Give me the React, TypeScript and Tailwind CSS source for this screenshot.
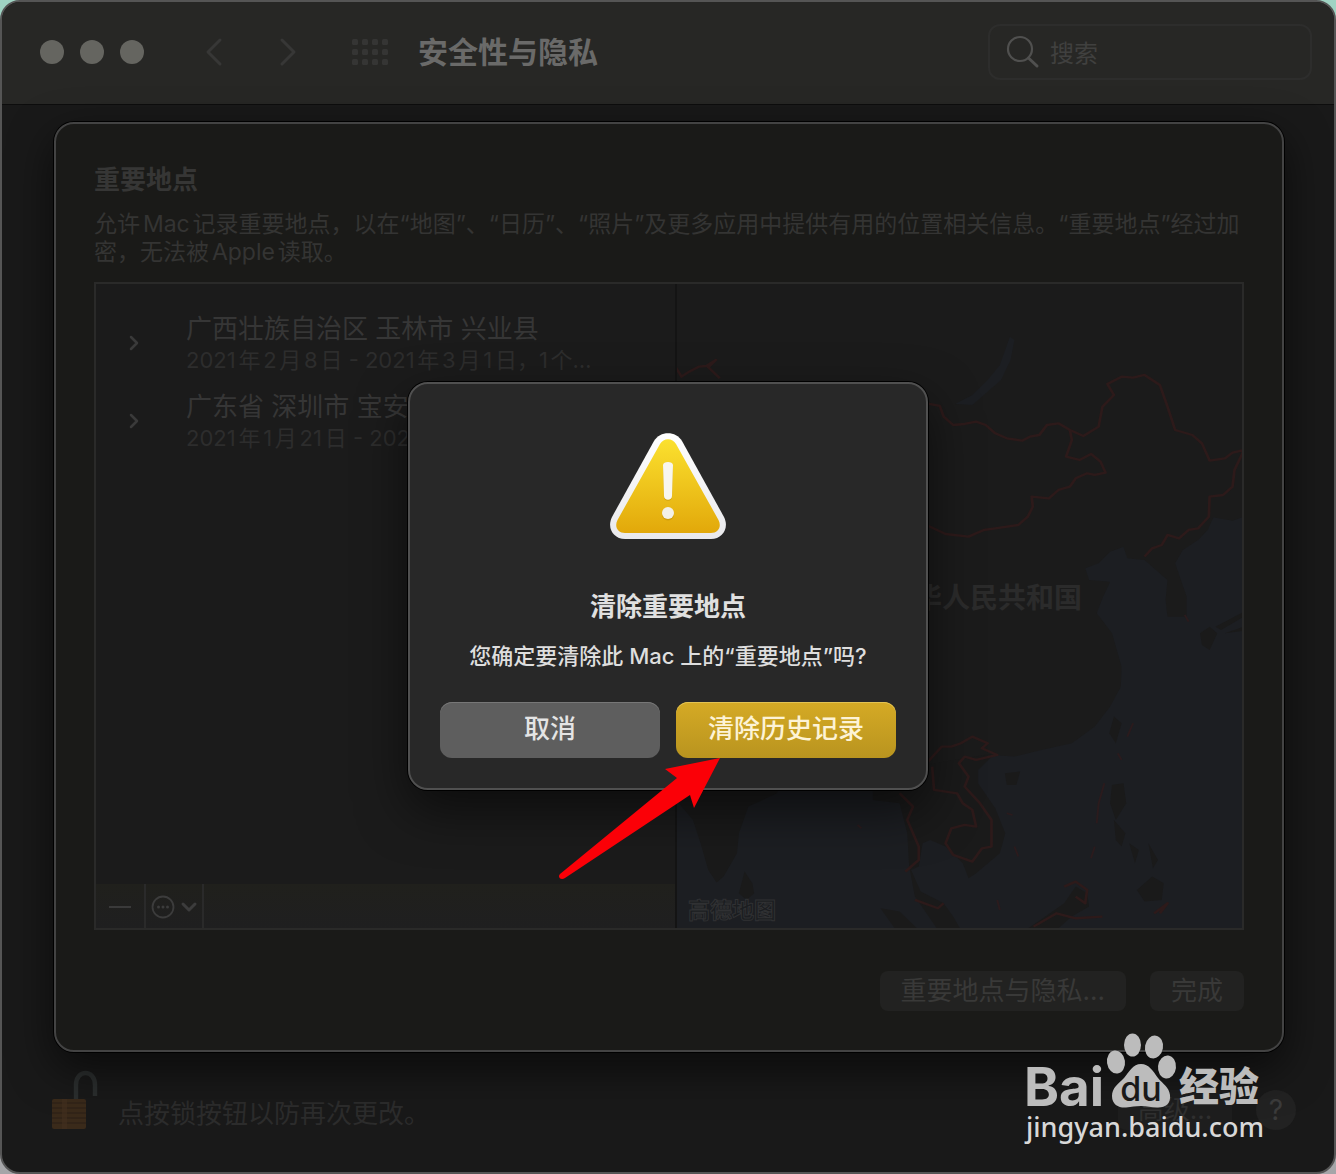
import { ReactNode } from "react";
import { ChevronDown, ChevronLeft, ChevronRight } from "lucide-react";

interface Place {
  id: number;
  name: string;
  period: string;
}

const places: Place[] = [
  {
    id: 1,
    name: "广西壮族自治区 玉林市 兴业县",
    period: "2021年2月8日 - 2021年3月1日，1个…",
  },
  {
    id: 2,
    name: "广东省 深圳市 宝安区",
    period: "2021年1月21日 - 2021年2月7日",
  },
];

const SheetButton = ({ children }: { children: ReactNode }) => {
  return (
    <button className="h-10 rounded-lg bg-[#222221] px-[21px] text-[26px] leading-10 text-[#393938]">
      {children}
    </button>
  );
};

const SearchIcon = () => (
  <svg viewBox="0 0 34 34" className="size-[34px]" fill="none" stroke="#50504f">
    <circle cx="14" cy="14" r="12" strokeWidth="2.2" />
    <path d="M22.5 23 L31 31" strokeWidth="3" strokeLinecap="round" />
  </svg>
);

const GridIcon = () => (
  <svg viewBox="0 0 36 28" className="h-7 w-9" fill="#353534">
    {[0, 10, 20, 30].map((x) =>
      [1, 11, 21].map((y) => (
        <rect key={`${x}-${y}`} x={x} y={y} width="6" height="6" rx="1.5" />
      ))
    )}
  </svg>
);

const Toolbar = () => {
  return (
    <header className="flex h-[103px] items-center border-b border-[#0d0d0d] bg-[#272725] pr-[22px] pb-0.5 pl-[38px]">
      <div className="flex gap-4">
        <button aria-label="关闭" className="size-6 rounded-full bg-[#656560]" />
        <button aria-label="最小化" className="size-6 rounded-full bg-[#656560]" />
        <button aria-label="缩放" className="size-6 rounded-full bg-[#656560]" />
      </div>
      <nav className="ml-[46px] flex gap-[26px] text-[#373736]">
        <button aria-label="后退">
          <ChevronLeft className="size-12" strokeWidth={1.5} />
        </button>
        <button aria-label="前进">
          <ChevronRight className="size-12" strokeWidth={1.5} />
        </button>
      </nav>
      <button aria-label="显示全部" className="ml-10">
        <GridIcon />
      </button>
      <h1 className="ml-[30px] flex-1 text-[30px] leading-9 font-bold text-[#6a6a69]">
        安全性与隐私
      </h1>
      <label className="flex h-14 w-[324px] items-center gap-2.5 rounded-xl border-2 border-[#2d2d2c] pl-4">
        <SearchIcon />
        <input
          type="search"
          aria-label="搜索"
          placeholder="搜索"
          className="min-w-0 flex-1 bg-transparent pt-1 text-2xl outline-none placeholder:text-[#40403f]"
        />
      </label>
    </header>
  );
};

const MapView = () => {
  return (
    <svg
      viewBox="677 284 565 644"
      preserveAspectRatio="xMidYMid slice"
      className="absolute inset-0 size-full"
    >
      <g transform="matrix(0.3827 0 0 0.3333 670 280)">
        {/* sea */}
        <path
          fill="#1c1e22"
          d="M1510 705 L1470 722 L1420 712 L1405 750 L1380 780 L1340 810 L1320 850 L1335 900 L1350 950 L1350 1010 L1300 1010 L1295 960 L1300 900 L1275 875 L1240 840 L1195 835 L1185 800 L1150 815 L1120 850 L1085 865 L1095 900 L1150 905 L1130 955 L1115 1000 L1155 1060 L1180 1160 L1178 1220 L1150 1280 L1110 1340 L1050 1390 L970 1410 L900 1430 L840 1425 L800 1470 L700 1480 L10 1480 L10 1960 L1510 1960 Z"
        />
        <path
          fill="#1c1e22"
          d="M888 170 L900 180 L890 240 L865 300 L820 345 L790 375 L745 372 L790 345 L830 300 L862 255 Z"
        />
        {/* land */}
        <g fill="#1a1a1a">
          <path d="M16 1480 L290 1480 L280 1540 L205 1580 L180 1660 L175 1720 L140 1790 L122 1808 L100 1770 L80 1690 L60 1620 L16 1560 Z" />
          <path d="M195 1775 L215 1810 L220 1840 L200 1860 L180 1840 Z" />
          <path d="M530 1480 L850 1420 L805 1470 L805 1510 L850 1585 L876 1660 L862 1720 L800 1780 L780 1795 L765 1750 L720 1700 L680 1680 L660 1690 L650 1760 L630 1770 L655 1835 L715 1870 L740 1910 L760 1950 L700 1950 L640 1850 L625 1760 L620 1660 L600 1570 L530 1560 Z" />
          <path d="M550 1885 L600 1895 L650 1950 L590 1950 Z" />
          <path d="M1030 1870 L1060 1820 L1090 1840 L1095 1880 L1050 1910 L1010 1950 L930 1950 Z" />
          <path d="M875 1480 L915 1475 L905 1515 L880 1515 Z" />
          <path d="M1160 1310 L1180 1330 L1165 1390 L1148 1360 Z" />
          <path d="M1155 1515 L1185 1510 L1192 1570 L1165 1620 L1150 1570 Z" />
          <path d="M1160 1620 L1190 1660 L1180 1700 L1165 1680 Z" />
          <path d="M1220 1830 L1260 1790 L1290 1810 L1285 1860 L1240 1865 Z" />
          <path d="M1200 1690 L1225 1710 L1215 1750 Z M1250 1690 L1275 1740 L1262 1765 Z" />
          <path d="M1385 1060 L1410 1040 L1430 1060 L1410 1110 L1390 1095 Z M1425 1040 L1500 995 L1500 1010 L1440 1050 Z M1450 1060 L1500 1040 L1500 1052 Z" />
        </g>
        {/* borders */}
        <g
          fill="none"
          stroke="#2d1a1a"
          strokeWidth="7"
          strokeLinejoin="round"
        >
          <path d="M15 262 L30 290 L50 275 L75 260 L95 258 L120 240 L100 262 L130 295" />
          <path d="M670 370 L705 378 L715 410 L740 435 L770 432 L800 425 L825 435 L850 460 L880 475 L920 482 L940 470 L965 465 L985 435 L1015 430 L1045 450 L1080 468 L1120 440 L1130 380 L1160 345 L1143 312 L1180 290 L1210 293 L1240 285 L1280 315 L1300 380 L1320 450 L1365 465 L1390 490 L1410 542 L1450 535 L1470 518 L1500 510 L1475 570 L1470 620 L1445 645 L1410 650 L1408 710 L1380 745 L1355 750 L1330 775 L1300 765 L1285 795 L1260 805 L1240 830" />
          <path d="M1045 450 L1050 480 L1035 530 L1070 540 L1100 522 L1125 545 L1138 578 L1110 585 L1090 580 L1060 595 L1045 620 L1015 630 L990 655 L945 650 L948 680 L935 710 L910 735 L850 745 L820 750 L780 770 L720 762 L670 735" />
          <path d="M670 1450 L710 1400 L735 1400 L760 1390 L790 1370 L830 1390 L815 1405 L855 1425 L800 1440 L770 1430 L755 1450 L780 1490 L770 1520 L810 1570 L840 1620 L840 1700 L815 1705 L790 1745 L740 1725 L720 1690 L735 1645 L770 1635 L800 1640 L790 1590 L765 1570 L750 1540 L690 1530 L685 1460" />
          <path d="M600 1540 L635 1580 L620 1620 L650 1700 L650 1740 L615 1775" />
          <path d="M640 1860 L700 1885 L715 1870 M1030 1820 L1060 1805 L1090 1830 L1085 1870 L1060 1850 M950 1940 L1010 1900 L1060 1915 L1130 1910 M1265 1900 L1300 1870 L1280 1900" />
        </g>
        <g fill="none" stroke="#2b1b1d" strokeWidth="5">
          <path d="M1135 1510 L1120 1570 L1115 1630 M1210 1330 L1195 1370 M900 1700 L910 1730 M1110 1700 L1100 1735 M855 1860 L862 1890 M1170 1420 L1180 1440 M1345 1005 L1355 1025 M880 1600 L895 1605 M490 1635 L500 1645" />
        </g>
      </g>
      <text x="886" y="608" fontSize="28" fontWeight="700" fill="#2b2b2b">
        中华人民共和国
      </text>
      <text
        x="688"
        y="918"
        fontSize="22"
        fontWeight="700"
        fill="#1b1d20"
        stroke="#303133"
        strokeWidth="1"
      >
        高德地图
      </text>
    </svg>
  );
};

const PlaceList = () => {
  return (
    <div className="flex w-[581px] flex-col border-r-2 border-[#141414]">
      <ul className="flex flex-1 flex-col gap-4 pt-7">
        {places.map((place) => (
          <li key={place.id} className="flex items-center pl-[26px]">
            <button aria-label="展开" className="w-16 shrink-0 text-[#3a3a3a]">
              <ChevronRight className="size-6" strokeWidth={2.5} />
            </button>
            <div className="whitespace-nowrap">
              <p className="text-[26px] leading-[34px] text-[#363636]">
                {place.name}
              </p>
              <p className="text-[22px] leading-7 text-[#2d2d2d] [text-autospace:normal]">
                {place.period}
              </p>
            </div>
          </li>
        ))}
      </ul>
      <div className="flex h-11 bg-linear-to-b from-[#20201c] to-[#1f1f20] text-[#3c3c3c]">
        <button
          aria-label="移除"
          className="flex w-[50px] items-center justify-center border-r-2 border-[#2a2a2a] pt-0.5"
        >
          <span className="h-0.5 w-[22px] bg-[#3a3a3a]" />
        </button>
        <button
          aria-label="更多"
          className="flex w-[58px] items-center justify-center gap-0.5 border-r-2 border-[#2a2a2a] pt-0.5 pl-1"
        >
          <svg viewBox="0 0 24 24" className="size-6" fill="currentColor">
            <circle
              cx="12"
              cy="12"
              r="10.5"
              fill="none"
              stroke="currentColor"
              strokeWidth="1.8"
            />
            <circle cx="7.5" cy="12" r="1.5" />
            <circle cx="12" cy="12" r="1.5" />
            <circle cx="16.5" cy="12" r="1.5" />
          </svg>
          <ChevronDown className="size-6" strokeWidth={3} />
        </button>
      </div>
    </div>
  );
};

const LocationsSheet = () => {
  return (
    <section className="relative rounded-[20px] border-2 border-[#434343] bg-[#1a1a18] px-[38px] pt-[38px] pb-[39px] shadow-[0_0_0_1px_#000,0_16px_44px_rgba(0,0,0,0.6)]">
      <h2 className="text-[26px] leading-9 font-bold text-[#363635]">
        重要地点
      </h2>
      <p className="mt-3 text-[23px] leading-7 text-[#343433] [text-autospace:normal]">
        允许Mac记录重要地点，以在“地图”、“日历”、“照片”及更多应用中提供有用的位置相关信息。“重要地点”经过加密，无法被Apple读取。
      </p>
      <div className="mt-4 flex h-[648px] border-2 border-[#2a2a29] bg-[#1b1b1b]">
        <PlaceList />
        <div className="relative flex-1 overflow-hidden">
          <MapView />
        </div>
      </div>
      <div className="mt-[41px] flex justify-end gap-6">
        <SheetButton>重要地点与隐私...</SheetButton>
        <SheetButton>完成</SheetButton>
      </div>
    </section>
  );
};

const LockIcon = () => (
  <svg viewBox="0 0 48 60" className="h-[60px] w-12">
    <path
      d="M26 29 V15 C26 -1 45 -1 45 15 V26"
      fill="none"
      stroke="#2b2e2e"
      strokeWidth="4.5"
    />
    <rect x="2" y="29" width="34" height="30" rx="2" fill="#3a2a1a" />
    <path
      d="M2 33 H36 M2 38 H36 M2 43 H36 M2 48 H36 M2 53 H36"
      stroke="#302318"
      strokeWidth="1.5"
    />
    <rect x="12" y="29" width="5" height="30" fill="#433120" opacity="0.6" />
  </svg>
);

const Watermark = () => (
  <svg
    viewBox="0 0 250 120"
    className="pointer-events-none absolute right-[62px] bottom-6 h-[120px] w-[250px]"
    fill="#bcbcbc"
  >
    <text x="2" y="78" fontSize="53" fontWeight="700">
      Bai
    </text>
    <ellipse cx="94" cy="34" rx="9" ry="11.5" transform="rotate(-8 94 34)" />
    <ellipse cx="110.500" cy="17" rx="8.500" ry="11.500" />
    <ellipse cx="132" cy="19" rx="9" ry="11.5" transform="rotate(10 132 19)" />
    <ellipse cx="145" cy="39" rx="9" ry="11.5" transform="rotate(6 145 39)" />
    <path d="M119 36 C111 36 107 44 102 50 C96 56 90 60 90 68 C90 77 97 80 104 79.500 C110 79 113 78 119 78 C125 78 129 79.500 135 79.500 C143 80 149 76 148 67 C147 59 141 56 136 50 C131 43 127 36 119 36 Z" />
    <text
      x="119"
      y="73"
      fontSize="34"
      fontWeight="500"
      fill="#191919"
      textAnchor="middle"
    >
      du
    </text>
    <text x="157" y="73" fontSize="40" fontWeight="900">
      经验
    </text>
    <text
      x="4"
      y="109"
      fontSize="27"
      fontWeight="500"
      fill="#d8d8d8"
      className="font-['Noto_Sans',sans-serif]"
    >
      jingyan.baidu.com
    </text>
  </svg>
);

const WindowFooter = () => {
  return (
    <footer className="flex items-center pt-[18px] pr-[38px] pb-10 pl-12">
      <LockIcon />
      <p className="ml-5 flex-1 pt-7 text-[26px] leading-8 text-[#2c2c2c]">
        点按锁按钮以防再次更改。
      </p>
      <button className="mt-5 h-10 w-[114px] rounded-lg bg-[#1e1e1e] text-[26px] leading-10 text-[#303030]">
        高级...
      </button>
      <button className="mt-5 ml-6 size-10 rounded-full bg-[#222] text-[28px] leading-10 text-[#3b3b3b]">
        ?
      </button>
    </footer>
  );
};

const WarningIcon = () => (
  <svg viewBox="0 0 116 106" className="h-[106px] w-[116px]">
    <defs>
      <linearGradient id="warnFill" x1="0" y1="0" x2="0" y2="1">
        <stop offset="0" stopColor="#fbe12f" />
        <stop offset="1" stopColor="#e2a80a" />
      </linearGradient>
      <linearGradient id="warnEdge" x1="0" y1="0" x2="0" y2="1">
        <stop offset="0" stopColor="#ffffff" />
        <stop offset="1" stopColor="#e9e9ec" />
      </linearGradient>
    </defs>
    <path
      d="M44 8 C50 -2.500 66 -2.500 72 8 L114 84 C119.500 95 112.500 106 101 106 H15 C3.500 106 -3.500 95 2 84 Z"
      fill="url(#warnEdge)"
    />
    <path
      d="M50 11 C53.500 4.500 62.500 4.500 66 11 L108.500 87 C112 94 108 100 101 100 H15 C8 100 4 94 7.500 87 Z"
      fill="url(#warnFill)"
    />
    <path
      d="M53 33 C53 28.500 63 28.500 63 33 L62 64 C62 69 54 69 54 64 Z"
      fill="#b98a0a"
      opacity="0.5"
    />
    <path
      d="M53 32 C53 28 63 28 63 32 L62 63 C62 68 54 68 54 63 Z"
      fill="#f8f6ee"
    />
    <circle cx="58" cy="81.500" r="6" fill="#b98a0a" opacity="0.5" />
    <circle cx="58" cy="80" r="6" fill="#f3f0e6" />
  </svg>
);

const ConfirmDialog = () => {
  return (
    <div className="absolute inset-0 flex items-center justify-center pb-0.5">
      <div
        role="alertdialog"
        aria-labelledby="confirm-title"
        className="relative flex w-[520px] flex-col items-center rounded-[20px] border-2 border-[#505050] bg-[#282828] px-[30px] pt-[49px] pb-[30px] shadow-[0_0_0_1px_#000,0_20px_50px_rgba(0,0,0,0.55)]"
      >
        <WarningIcon />
        <h2
          id="confirm-title"
          className="mt-[50px] text-[26px] leading-9 font-bold text-[#e0e0e0]"
        >
          清除重要地点
        </h2>
        <p className="mt-[15px] text-[22px] leading-8 font-medium text-[#dedede]">
          您确定要清除此 Mac 上的“重要地点”吗?
        </p>
        <div className="mt-[30px] grid w-full grid-cols-2 gap-4 text-[26px] font-medium">
          <button className="h-14 rounded-xl bg-[#5e5e5e] pb-1 text-[#e4e4e4] shadow-[inset_0_1px_0_#777]">
            取消
          </button>
          <button className="h-14 rounded-xl bg-linear-to-b from-[#d5aa25] to-[#b9941f] pb-1 text-[#fdf3d6] shadow-[inset_0_1px_0_#e3c353]">
            清除历史记录
          </button>
        </div>
        <svg
          viewBox="556 756 168 126"
          className="pointer-events-none absolute top-[372px] left-[146px] h-[126px] w-[168px]"
        >
          <path
            d="M720 758 L665 769 L677 778 L560 874 C557 877 561 881 565 878 L690 795 L694 808 Z"
            fill="#fb0007"
          />
        </svg>
      </div>
    </div>
  );
};

const App = () => {
  return (
    <div
      lang="zh-CN"
      className="min-h-screen bg-linear-to-b from-[#9fd3c3] to-[#a5a5a8] font-[Inter,'Noto_Sans_CJK_SC',sans-serif]"
    >
      <div className="relative min-h-screen overflow-hidden rounded-[20px] border-2 border-[#555] bg-[#191919]">
        <Toolbar />
        <main className="pt-[17px] pr-[50px] pl-[52px]">
          <LocationsSheet />
        </main>
        <WindowFooter />
        <Watermark />
        <ConfirmDialog />
      </div>
    </div>
  );
};

export default App;
